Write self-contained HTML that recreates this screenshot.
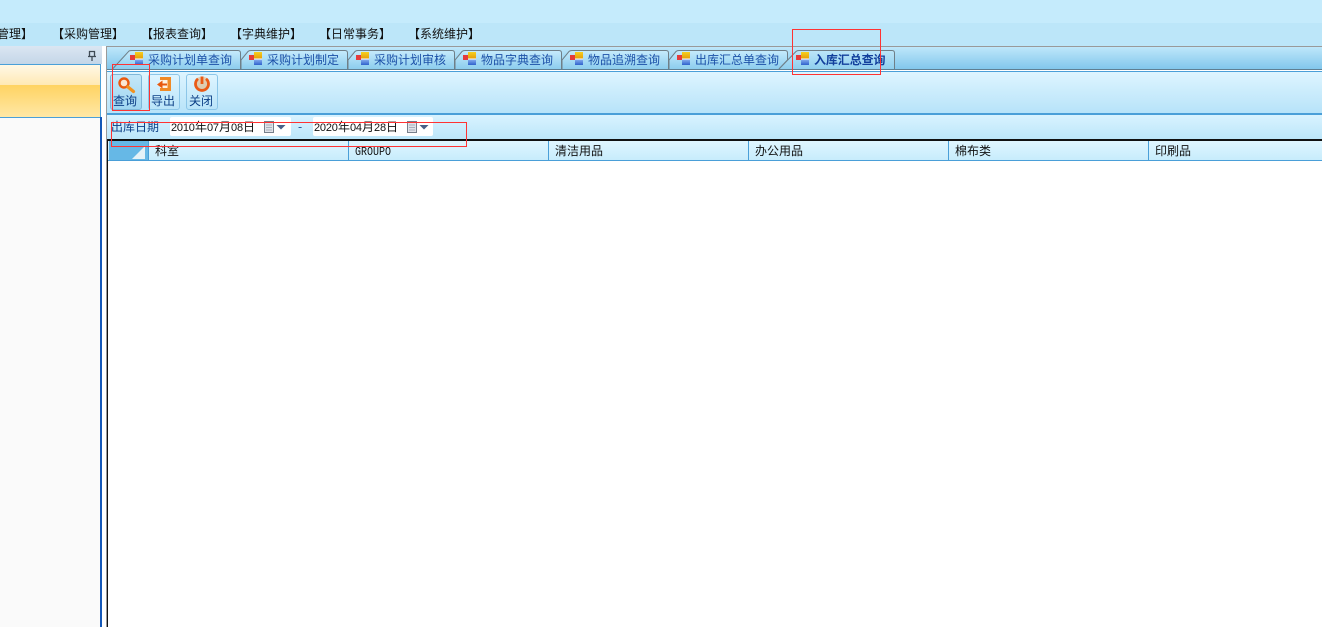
<!DOCTYPE html>
<html><head><meta charset="utf-8"><style>
html,body{margin:0;padding:0;background:#fff}
#p{position:relative;width:1322px;height:627px;overflow:hidden;background:#fff;font:12px/14px "WenQuanYi Zen Hei","Noto Sans CJK SC","Liberation Sans",sans-serif}
#p div{position:absolute;white-space:nowrap}
em{font:11px/14px "Liberation Sans",sans-serif;font-style:normal;display:inline-block;width:12px;letter-spacing:-.2px}
.m{top:27px;color:#111}
.t{top:53px;color:#1c51a8}
.h{top:144px;color:#111}
.v{top:141px;width:1px;height:19px;background:#4a9fd8}
.b{top:74px;width:30px;height:34px;border:1px solid #8cc6e8;border-radius:3px;background:linear-gradient(#dff5ff,#b9e4f9)}
.l{top:94px;color:#0c3f86;font-size:12px}
.r{border:1px solid #f33;box-sizing:border-box}
.d{top:117px;height:19px;background:#fff;border-radius:2px}
svg{position:absolute;overflow:visible}
</style></head><body><div id="p">
<div style="left:0;top:0;width:1322px;height:23px;background:#c5ebfc"></div>
<div style="left:0;top:23px;width:1322px;height:23px;background:#bce6f9"></div>
<div class="m" style="left:-3px">管理】</div>
<div class="m" style="left:52px">【采购管理】</div>
<div class="m" style="left:141px">【报表查询】</div>
<div class="m" style="left:230px">【字典维护】</div>
<div class="m" style="left:319px">【日常事务】</div>
<div class="m" style="left:408px">【系统维护】</div>

<div style="left:0;top:46px;width:102px;height:18px;background:linear-gradient(#dbe6f2,#c4d6e8)"></div>
<svg style="left:87px;top:50px" width="10" height="12"><path d="M2.500 1.500h5v5h-5zM1 6.500h8M5 7v4" fill="none" stroke="#3f4a55" stroke-width="1.300"/></svg>
<div style="left:0;top:64px;width:101px;height:1px;background:#4a9fd8"></div>
<div style="left:0;top:65px;width:101px;height:20px;background:linear-gradient(#fff8e6,#ffe9b4)"></div>
<div style="left:0;top:85px;width:101px;height:32px;background:linear-gradient(#ffd362,#ffe8a6)"></div>
<div style="left:0;top:117px;width:101px;height:1px;background:#4a9fd8"></div>
<div style="left:0;top:118px;width:100px;height:509px;background:#fafafa"></div>
<div style="left:100px;top:65px;width:1px;height:53px;background:#4a9fd8"></div>
<div style="left:100px;top:117px;width:2px;height:510px;background:#1458b8"></div>
<div style="left:102px;top:46px;width:4px;height:581px;background:#fff"></div>

<div style="left:106px;top:46px;width:1216px;height:1px;background:#9a9a9a"></div>
<div style="left:106px;top:47px;width:1px;height:580px;background:#9a9a9a"></div>
<div style="left:107px;top:47px;width:1215px;height:22px;background:linear-gradient(#bee7fa,#82c7ec)"></div>
<div style="left:107px;top:69px;width:1215px;height:1px;background:#5f7f92"></div>
<div style="left:107px;top:70px;width:1215px;height:1px;background:#fff"></div>
<div style="left:107px;top:71px;width:1215px;height:1px;background:#4a9fd8"></div>

<svg style="left:0;top:0" width="1322" height="80">
<defs><linearGradient id="g" x1="0" y1="0" x2="0" y2="1"><stop offset="0" stop-color="#c6ebfc"/><stop offset="1" stop-color="#8ccdee"/></linearGradient>
<linearGradient id="a" x1="0" y1="0" x2="0" y2="1"><stop offset="0" stop-color="#bde6f9"/><stop offset="1" stop-color="#8fcfee"/></linearGradient>
<linearGradient id="y" x1="0" y1="0" x2="0" y2="1"><stop offset="0" stop-color="#f6d020"/><stop offset="1" stop-color="#e39a08"/></linearGradient>
<linearGradient id="u" x1="0" y1="0" x2="0" y2="1"><stop offset="0" stop-color="#8db4f2"/><stop offset="1" stop-color="#2f62cc"/></linearGradient>
<g id="k"><rect x="0" y="3" width="5" height="5" fill="#e43b3b"/><rect x="5" y="0" width="8" height="7" fill="url(#y)"/><rect x="5" y="7" width="8" height="6" fill="url(#u)"/><rect x="5" y="6.500" width="8" height="1" fill="#fff"/></g></defs>
<g fill="url(#g)" stroke="#6f7f88">
<path d="M112.500 69L129 51Q130 50.500 132 50.500H238Q240.500 50.500 240.500 53V69"/>
<path d="M241 69V60L248 51.500Q249 50.500 251 50.500H345Q347.500 50.500 347.500 53V69"/>
<path d="M348 69V60L355 51.500Q356 50.500 358 50.500H452Q454.500 50.500 454.500 53V69"/>
<path d="M455 69V60L462 51.500Q463 50.500 465 50.500H559Q561.500 50.500 561.500 53V69"/>
<path d="M562 69V60L569 51.500Q570 50.500 572 50.500H666Q668.500 50.500 668.500 53V69"/>
<path d="M669 69V60L676 51.500Q677 50.500 679 50.500H785Q787.500 50.500 787.500 53V60L779 69"/>
<path fill="url(#a)" d="M779 69L796 51.500Q797 50.500 799 50.500H892Q894.500 50.500 894.500 53V69"/>
</g>
<use href="#k" x="130" y="52"/><use href="#k" x="249" y="52"/><use href="#k" x="356" y="52"/><use href="#k" x="463" y="52"/><use href="#k" x="570" y="52"/><use href="#k" x="677" y="52"/><use href="#k" x="796" y="52"/>
</svg>
<div class="t" style="left:148px">采购计划单查询</div>
<div class="t" style="left:267px">采购计划制定</div>
<div class="t" style="left:374px">采购计划审核</div>
<div class="t" style="left:481px">物品字典查询</div>
<div class="t" style="left:588px">物品追溯查询</div>
<div class="t" style="left:695px">出库汇总单查询</div>
<div class="t" style="left:814px;color:#123f9c;font-weight:bold;letter-spacing:-.1px">入库汇总查询</div>

<div style="left:107px;top:72px;width:1215px;height:41px;background:linear-gradient(#def5ff,#b7e3f9)"></div>
<div style="left:107px;top:113px;width:1215px;height:2px;background:#4a9fd8"></div>
<div style="left:107px;top:115px;width:1215px;height:24px;background:linear-gradient(#d9f3ff,#bce6fa)"></div>

<div class="b" style="left:110px;background:linear-gradient(#c4e7f8,#9fd6f1);border-color:#7fb7d8"></div>
<div class="b" style="left:148px"></div>
<div class="b" style="left:186px"></div>
<svg style="left:110px;top:74px" width="110" height="20">
<circle cx="14" cy="9" r="4.500" fill="#fbe7d2" stroke="#e8590f" stroke-width="2.400"/>
<path d="M18 13L23.500 17.500" stroke="#f2921e" stroke-width="3.200" stroke-linecap="round"/>
<path d="M50 3H61V17H50V14H57.500V6H50Z" fill="#f08a26"/>
<rect x="50" y="6" width="7.500" height="8" fill="#fdf1e2"/>
<path d="M57 10.500H49" stroke="#e8590f" stroke-width="2"/>
<path d="M52.500 6.500L47 10.500L52.500 14.500Z" fill="#e8590f"/>
<circle cx="92" cy="10" r="7.500" fill="#f08a26" opacity=".35"/>
<path d="M88 4.800A6.500 6.500 0 1 0 96 4.800" fill="none" stroke="#ea5a16" stroke-width="2.800"/>
<path d="M92 2.500V10" stroke="#ea5a16" stroke-width="2.800"/>
</svg>
<div class="l" style="left:113px">查询</div>
<div class="l" style="left:151px">导出</div>
<div class="l" style="left:189px">关闭</div>

<div style="left:111px;top:120px;color:#0c3f86">出库日期</div>
<div class="d" style="left:170px;width:121px"></div>
<div class="d" style="left:313px;width:120px"></div>
<div style="left:171px;top:120px;color:#111"><em style="width:24px">2010</em>年<em>07</em>月<em>08</em>日</div>
<div style="left:314px;top:120px;color:#111"><em style="width:24px">2020</em>年<em>04</em>月<em>28</em>日</div>
<div style="left:298px;top:120px;color:#0c3f86">-</div>
<svg style="left:263px;top:121px" width="170" height="14">
<g fill="#dfe2e8" stroke="#77808c"><rect x="1.500" y="0.500" width="9" height="11"/><rect x="144.500" y="0.500" width="9" height="11"/></g>
<g stroke="#a8b0bc"><path d="M3 4h6M3 6.500h6M3 9h6M146 4h6M146 6.500h6M146 9h6"/></g>
<path d="M13.500 4h9l-4.500 4.500zM156.500 4h9l-4.500 4.500z" fill="#4a5f86"/>
</svg>

<div style="left:107px;top:139px;width:1215px;height:2px;background:#111"></div>
<div style="left:107px;top:139px;width:1px;height:488px;background:#111"></div>
<div style="left:108px;top:141px;width:1214px;height:19px;background:linear-gradient(#e0f6ff,#c7ecfc)"></div>
<div style="left:108px;top:160px;width:1214px;height:1px;background:#4a9fd8"></div>
<div style="left:109px;top:141px;width:39px;height:19px;background:#66b8e6"></div>
<svg style="left:132px;top:146px" width="14" height="13"><path d="M13 0V13H0Z" fill="#e4f2f8"/></svg>
<div class="v" style="left:148px"></div><div class="v" style="left:348px"></div><div class="v" style="left:548px"></div><div class="v" style="left:748px"></div><div class="v" style="left:948px"></div><div class="v" style="left:1148px"></div>
<div class="h" style="left:155px">科室</div>
<div class="h" style="left:355px;top:149px;font:10px/10px 'Liberation Mono',monospace;transform:scaleY(1.200)">GROUPO</div>
<div class="h" style="left:555px">清洁用品</div>
<div class="h" style="left:755px">办公用品</div>
<div class="h" style="left:955px">棉布类</div>
<div class="h" style="left:1155px">印刷品</div>

<div class="r" style="left:112px;top:64px;width:38px;height:47px"></div>
<div class="r" style="left:111px;top:122px;width:356px;height:25px"></div>
<div class="r" style="left:792px;top:29px;width:89px;height:46px"></div>
</div></body></html>
